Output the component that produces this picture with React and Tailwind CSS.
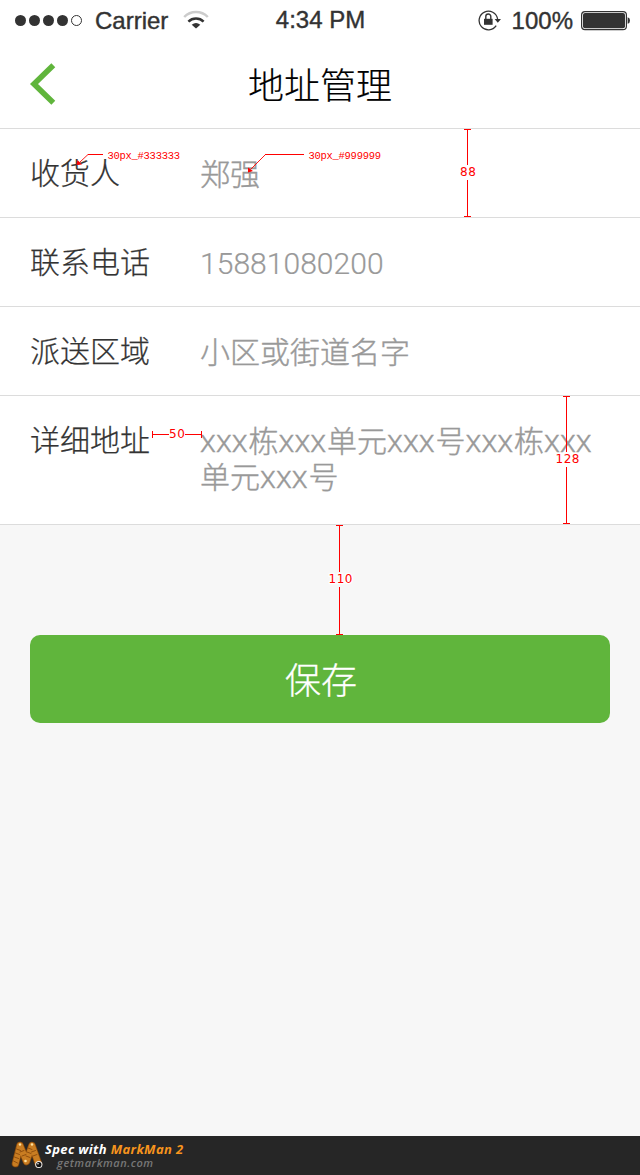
const latin = "font-['Liberation_Sans',Arial,sans-serif]";

function Signal() {
  return (
    <svg width="70" height="14" viewBox="0 0 70 14" fill="#333">
      <circle cx="6.5" cy="6.5" r="5.5" />
      <circle cx="20.5" cy="6.5" r="5.5" />
      <circle cx="34.5" cy="6.5" r="5.5" />
      <circle cx="48.5" cy="6.5" r="5.5" />
      <circle cx="62.5" cy="6.5" r="5" fill="none" stroke="#333" />
    </svg>
  );
}

function Wifi() {
  return (
    <svg width="26" height="20" viewBox="0 0 26 20" fill="none" strokeWidth="2.5">
      <path d="M1.2 7 A16.5 16.5 0 0 1 24.8 7" stroke="#ccc" />
      <path d="M5.4 11.6 A10.8 10.8 0 0 1 20.6 11.6" stroke="#333" />
      <path d="M13 18.6 L8.7 14.7 Q13 11.3 17.3 14.7 Z" fill="#333" />
    </svg>
  );
}

function RotationLock() {
  return (
    <svg width="24" height="22" viewBox="0 0 24 22" fill="none">
      <path d="M18.2 15.6 A9.3 9.3 0 1 1 19.6 9" stroke="#333" strokeWidth="1.3" />
      <path d="M16.6 9 H23 L19.8 12.7 Z" fill="#333" />
      <rect x="6" y="8.8" width="8.6" height="6" fill="#333" />
      <path d="M7.8 9 V6.5 a2.5 2.5 0 0 1 5 0 V9" stroke="#333" strokeWidth="1.4" />
    </svg>
  );
}

function Battery() {
  return (
    <svg width="50" height="20" viewBox="0 0 50 20">
      <rect x="0.6" y="0.6" width="44.8" height="18" rx="3.4" fill="none" stroke="#333" strokeWidth="1.2" />
      <rect x="2" y="2" width="42" height="15.2" rx="2" fill="#333" />
      <path d="M46.6 6.2 Q49 6.6 49 9.5 Q49 12.4 46.6 12.8 Z" fill="#333" />
    </svg>
  );
}

function Row({ label, tall, children }) {
  return (
    <div className={`flex border-b border-[#dcdcdc] pt-6 pl-[30px] ${tall ? "h-[129px]" : "h-[89px]"}`}>
      <div className="w-[170px] shrink-0 leading-9 text-[#333] [-webkit-text-stroke:0.25px_#333]">{label}</div>
      <div className="pt-px leading-9 whitespace-nowrap text-[#999] [-webkit-text-stroke:0.4px_#999]">{children}</div>
    </div>
  );
}

function X() {
  return <span className="inline-block w-[48.5px] font-['Noto_Sans',sans-serif] text-[31.5px] leading-none">xxx</span>;
}

function Annotations() {
  return (
    <svg className="pointer-events-none absolute top-0 left-0 font-normal" width="640" height="640" fill="none" stroke="#f00">
      <g shapeRendering="crispEdges">
        <path d="M464 129.5 H471 M467.5 129 V165 M467.5 180 V217 M464 216.5 H471" />
        <path d="M563 396.5 H570 M566.5 396 V452 M566.5 467 V524 M563 523.5 H570" />
        <path d="M336 525.5 H343 M339.5 525 V572 M339.5 587 V635 M336 634.5 H343" />
        <path d="M152.5 431 V438 M152 434.5 H169 M185 434.5 H202 M201.5 431 V438" />
        <path d="M88 154.5 H103 M265 154.5 H304" />
      </g>
      <path d="M88 154.5 L80 162 M265.5 154.5 L251 169" strokeWidth="0.9" />
      <path d="M77.5 160 L82 164.5 L76.5 165 Z M248 167.5 L253 171 L248 172.5 Z" fill="#f00" stroke="none" />
      <g fill="#f00" stroke="none" fontFamily="DejaVu Sans, Verdana, sans-serif" fontSize="12" textAnchor="middle">
        <text x="468" y="176" textLength="16">88</text>
        <text x="567.5" y="463" textLength="24">128</text>
        <text x="340.5" y="583" textLength="24" stroke="#fff" strokeWidth="2.5" paintOrder="stroke">110</text>
        <text x="177" y="438" textLength="16">50</text>
      </g>
      <g fill="#f00" stroke="none" fontFamily="Liberation Mono, monospace" fontSize="10.5">
        <text x="107.5" y="159" textLength="72.5">30px_#333333</text>
        <text x="308.5" y="159" textLength="72.5">30px_#999999</text>
      </g>
    </svg>
  );
}

function MarkManLogo() {
  return (
    <svg width="34" height="32" viewBox="0 0 34 32" fill="none" strokeLinecap="round" strokeLinejoin="round">
      <path d="M4.5 24.5 L9 6.5 L15.5 22.5 L21 6.5 L27.5 25" stroke="#8a4a0c" strokeWidth="7.5" />
      <path d="M4.5 24.5 L9 6.5 L15.5 22.5 L21 6.5 L27.5 25" stroke="#c97d22" strokeWidth="6" />
      <path d="M2.5 22 l4 2 M3.5 18 l4 1.5 M4.5 14 l4 1.5 M5.5 10 l4 1.5 M9 13 l4 -1.5 M11 17 l4 -1.5 M15 17 l4 1.5 M16 13 l4 1.5 M17 9 l4 1.5 M20.5 13 l4 -1.5 M22 17 l4 -1.5" stroke="#8a4a0c" strokeWidth="0.9" />
      <circle cx="9" cy="5.5" r="1.2" fill="#ffe2a0" />
      <circle cx="21" cy="5.5" r="1.2" fill="#ffe2a0" />
      <circle cx="14.5" cy="22" r="1.3" fill="#ffe2a0" />
      <circle cx="27.8" cy="25.5" r="3.6" fill="#eee" />
      <circle cx="27.8" cy="25.5" r="2.6" fill="#111" />
      <circle cx="27" cy="24.7" r="0.8" fill="#fff" />
    </svg>
  );
}

export default function App() {
  return (
    <div className="relative flex h-[1175px] w-[640px] flex-col overflow-hidden bg-[#f7f7f7] font-['Noto_Sans_CJK_SC',sans-serif] text-[30px] font-light">
      <div className={`grid h-10 shrink-0 grid-cols-[1fr_auto_1fr] bg-white text-2xl leading-none font-normal text-[#333] [-webkit-text-stroke:0.4px_#333] ${latin}`}>
        <div className="flex items-start pl-3.5">
          <div className="pt-[13.5px]"><Signal /></div>
          <span className="ml-[11px] pt-[9px]">Carrier</span>
          <div className="ml-[15px] pt-[10px]"><Wifi /></div>
        </div>
        <span className="pt-2 pl-px">4:34 PM</span>
        <div className="flex items-start justify-end pr-[9px]">
          <div className="-mr-0.5 pt-[10px]"><RotationLock /></div>
          <span className="mr-[8px] ml-3 pt-[9px]">100%</span>
          <div className="pt-[11px]"><Battery /></div>
        </div>
      </div>

      <header className="grid h-[89px] shrink-0 grid-cols-[100px_1fr_100px] border-b border-[#dcdcdc] bg-white">
        <button className="flex items-start pt-[22px] pl-[29px]">
          <svg width="28" height="44" viewBox="0 0 28 44" fill="none" stroke="#60b53c" strokeWidth="5.6">
            <path d="M24.3 3.2 L5 22 L24.3 40.8" />
          </svg>
        </button>
        <h1 className="pt-[17px] text-center text-4xl leading-[52px] font-light text-black [-webkit-text-stroke:0.2px_#000]">地址管理</h1>
      </header>

      <section className="shrink-0 bg-white">
        <Row label="收货人">郑强</Row>
        <Row label="联系电话"><span className="font-[Roboto,sans-serif] tracking-[0.05px] [-webkit-text-stroke:0.2px_#999]">15881080200</span></Row>
        <Row label="派送区域">小区或街道名字</Row>
        <Row label="详细地址" tall>
          <X />栋<X />单元<X />号<X />栋<X /><br />单元<X />号
        </Row>
      </section>

      <button className="mx-[30px] mt-[110px] h-[88px] shrink-0 rounded-[10px] bg-[#60b53c] pb-0.5 pl-0.5 text-4xl font-light text-white [-webkit-text-stroke:0.3px_#fff]">保存</button>

      <footer className="mt-auto flex h-[39px] shrink-0 items-start bg-[#262626] pl-[11px] font-['Open_Sans',sans-serif] text-[13px] font-bold italic">
        <div className="pt-[3px]"><MarkManLogo /></div>
        <div className="flex flex-col pt-[6px] leading-[15px] whitespace-nowrap">
          <span className="tracking-[0.35px] text-white">Spec with <span className="text-[#f7941d]">MarkMan 2</span></span>
          <span className="pl-[12px] text-[11px] leading-[11px] font-semibold tracking-[0.55px] text-[#777]">getmarkman.com</span>
        </div>
      </footer>
      <Annotations />
    </div>
  );
}
